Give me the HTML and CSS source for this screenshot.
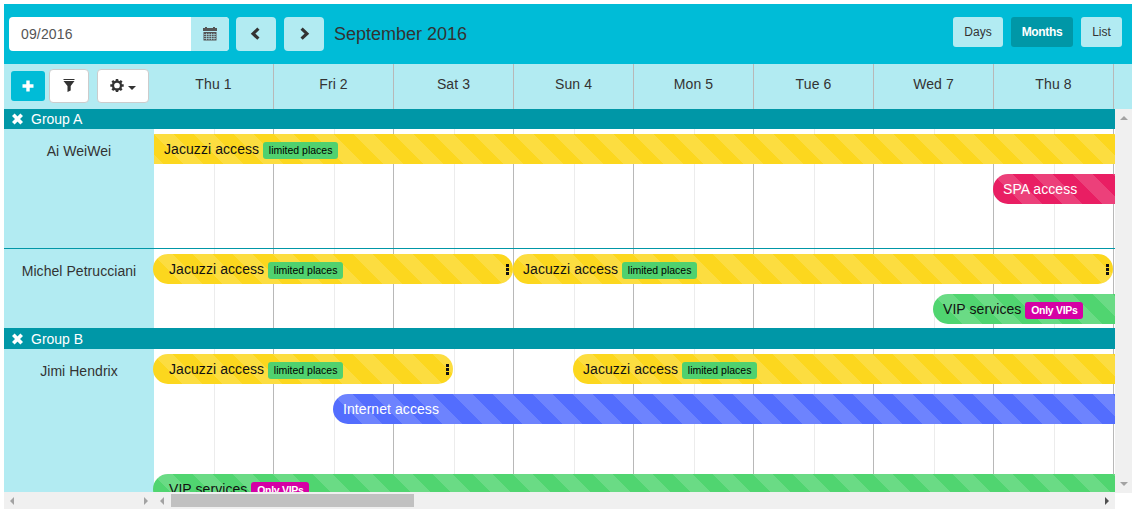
FILE: index.html
```html
<!DOCTYPE html>
<html lang="en">
<head>
<meta charset="utf-8">
<title>Calendar</title>
<link rel="stylesheet" href="styles.css">
</head>
<body>
<div class="planner">
  <header class="toolbar">
    <div class="date-field">
      <span class="date-value">09/2016</span>
      <span class="date-addon"><svg width="14" height="14" viewBox="0 0 14 14" fill="#555"><path d="M0 4V1h2V0h2v1h6V0h2v1h2v3z"/><path d="M.5 5h13v8.500H.5z"/><path d="M1 7.500h12M1 9.500h12M1 11.500h12M3.500 6v7M6 6v7M8.500 6v7M11 6v7" stroke="#b2ebf2" stroke-width=".6"/></svg></span>
    </div>
    <button class="nav"><svg width="14" height="14" viewBox="0 0 14 14"><path d="M9.400 1.700 4.100 6.700l5.300 5" fill="none" stroke="#333" stroke-width="3.200"/></svg></button>
    <button class="nav"><svg width="14" height="14" viewBox="0 0 14 14"><path d="M4.600 1.700 9.900 6.700l-5.300 5" fill="none" stroke="#333" stroke-width="3.200"/></svg></button>
    <h1 class="title">September 2016</h1>
    <nav class="views">
      <button class="view">Days</button>
      <button class="view active">Months</button>
      <button class="view">List</button>
    </nav>
  </header>

  <div class="heading">
    <div class="actions">
      <button class="add"><svg width="12" height="12" viewBox="0 0 12 12"><path d="M6 .5v11M.5 6h11" stroke="#fff" stroke-width="3.400"/></svg></button>
      <button class="tool filter"><svg width="12" height="14" viewBox="0 0 12 14" fill="#333"><path d="M.5 0h11v1H.5zM.5 2h11L7.700 7v4.500L4.500 13V7z"/></svg></button>
      <button class="tool gear"><svg width="14" height="14" viewBox="0 0 14 14" fill="none" stroke="#333"><circle cx="7" cy="6.500" r="4" stroke-width="2.300"/><path d="M7 0v2M7 11v2M.3 6.500h2M11.700 6.500h2M2.300 1.800l1.500 1.500M10.200 9.700l1.500 1.500M11.700 1.800l-1.500 1.500M3.800 9.700l-1.500 1.500" stroke-width="2.500"/></svg><i class="caret"></i></button>
    </div>
    <div class="days">
      <span>Thu 1</span><span>Fri 2</span><span>Sat 3</span><span>Sun 4</span><span>Mon 5</span><span>Tue 6</span><span>Wed 7</span><span>Thu 8</span>
    </div>
  </div>

  <div class="main">
    <div class="content">
      <div class="group"><svg width="11" height="12" viewBox="0 0 11 12"><path d="M1.300 1.800l8.400 8.400M9.700 1.800l-8.400 8.400" stroke="#fff" stroke-width="3.700"/></svg>Group A</div>
      <section class="row tall">
        <div class="name">Ai WeiWei</div>
        <div class="lanes">
          <div class="lane"><div class="bar yellow from-1 to-end continued">Jacuzzi access <b class="tag places">limited places</b></div></div>
          <div class="lane"><div class="bar red from-15 to-end">SPA access</div></div>
        </div>
      </section>
      <section class="row">
        <div class="name">Michel Petrucciani</div>
        <div class="lanes">
          <div class="lane">
            <div class="bar yellow from-1 to-7 closed">Jacuzzi access <b class="tag places">limited places</b><i class="grip"></i></div>
            <div class="bar yellow from-7 to-17 closed">Jacuzzi access <b class="tag places">limited places</b><i class="grip"></i></div>
          </div>
          <div class="lane"><div class="bar green from-14 to-end">VIP services <b class="tag vip">Only VIPs</b></div></div>
        </div>
      </section>
      <div class="group"><svg width="11" height="12" viewBox="0 0 11 12"><path d="M1.300 1.800l8.400 8.400M9.700 1.800l-8.400 8.400" stroke="#fff" stroke-width="3.700"/></svg>Group B</div>
      <section class="row last">
        <div class="name">Jimi Hendrix</div>
        <div class="lanes">
          <div class="lane">
            <div class="bar yellow from-1 to-6 closed">Jacuzzi access <b class="tag places">limited places</b><i class="grip"></i></div>
            <div class="bar yellow from-8 to-end">Jacuzzi access <b class="tag places">limited places</b></div>
          </div>
          <div class="lane"><div class="bar blue from-4 to-end">Internet access</div></div>
          <div class="lane"></div>
          <div class="lane"><div class="bar green from-1 to-end">VIP services <b class="tag vip">Only VIPs</b></div></div>
        </div>
      </section>
    </div>
    <div class="vscroll"><i class="arrow up"></i><i class="arrow down"></i></div>
  </div>
  <footer class="hscrolls">
    <div class="hscroll side"><i class="arrow left"></i><i class="arrow right"></i></div>
    <div class="hscroll wide"><i class="arrow left"></i><i class="thumb"></i><i class="arrow right dark"></i></div>
  </footer>
</div>
</body>
</html>
```
FILE: styles.css
```css
* { box-sizing: border-box; }
body {
  margin: 0;
  padding: 4px;
  overflow: hidden;
  background: #fff;
  color: #333;
  font: 14px/20px "Liberation Sans", Arial, sans-serif;
}
button { font: inherit; color: inherit; border: 0; padding: 0; display: flex; align-items: center; justify-content: center; }
svg { display: block; flex: none; }
.planner { width: 1128px; }

.toolbar { display: flex; align-items: flex-start; height: 60px; padding: 13px 10px 0 5px; background: #00bcd7; }
.date-field { display: flex; width: 220px; height: 34px; margin-right: 7px; border-radius: 4px; overflow: hidden; background: #fff; color: #555; }
.date-value { flex: 1; padding: 7px 12px; letter-spacing: .15px; }
.date-addon { width: 38px; display: flex; align-items: center; justify-content: center; background: #b2ebf2; }
.nav { width: 40px; height: 34px; margin-right: 8px; border-radius: 4px; background: #b2ebf2; }
.title { margin: 0 0 0 2px; font-size: 18px; font-weight: 400; line-height: 35px; }
.views { display: flex; gap: 8px; margin-left: auto; font-size: 12px; }
.view { height: 30px; width: 50px; border-radius: 3px; background: #b2ebf2; }
.view:last-child { width: 41px; }
.view.active { width: 62px; background: #0097a7; color: #fff; font-weight: 700; letter-spacing: -.35px; }

.heading { display: flex; height: 45px; background: #b2ebf2; }
.actions { display: flex; align-items: flex-start; width: 150px; padding: 5px 0 0 7px; }
.add { width: 34px; height: 30px; margin: 2px 4px 0 0; border-radius: 3px; background: #00bcd7; }
.tool { height: 34px; border: 1px solid #ccc; border-radius: 4px; background: #fff; }
.filter { width: 40px; margin-right: 8px; }
.gear { width: 52px; gap: 4px; }
.caret { border: 4px solid transparent; border-top-color: #333; border-bottom: 0; margin-top: 3px; }
.days { display: grid; grid-template-columns: repeat(8, 120px); }
.days span { padding-top: 10px; border-right: 1px solid #b8b8b8; text-align: center; letter-spacing: .1px; }

.main { display: flex; height: 383px; }
.content { width: 1111px; height: 383px; overflow: hidden; }
.group { display: flex; align-items: center; gap: 8px; height: 20px; padding-left: 8px; background: #0097a7; color: #fff; }
.row { display: flex; height: 80px; border-bottom: 1px solid #0097a7; }
.tall { height: 120px; }
.last { height: 160px; border: 0; }
.name { flex: none; width: 150px; padding-top: 12px; background: #b2ebf2; text-align: center; letter-spacing: .05px; }
.lanes {
  flex: 1;
  background:
    repeating-linear-gradient(90deg, transparent 0 60px, #ececec 60px 61px, transparent 61px 119px, #b8b8b8 119px 120px);
}
.lane { display: grid; grid-template-columns: repeat(16, 60px) 2px; height: 40px; margin-left: -1px; padding: 5px 0; }
.bar {
  --shine: rgba(255, 255, 255, .15);
  display: flex;
  height: 30px;
  padding-left: 10px;
  border-radius: 15px 0 0 15px;
  background-image: linear-gradient(45deg, var(--shine) 25%, transparent 25%, transparent 50%, var(--shine) 50%, var(--shine) 75%, transparent 75%, transparent);
  background-size: 40px 40px;
  line-height: 30px;
  letter-spacing: .07px;
  white-space: nowrap;
  grid-row: 1;
}
.bar.from-1 { padding-left: 16px; }
.bar.continued { padding-left: 10px; margin-left: 1px; border-radius: 0; }
.bar.closed { border-radius: 15px; }
.yellow { background-color: #fcd71e; color: #111; }
.red { background-color: #e91e63; color: #fff; }
.green { background-color: #50d570; color: #111; }
.blue { background-color: #536dfe; color: #fff; }
.from-1 { grid-column-start: 1; }
.from-4 { grid-column-start: 4; }
.from-7 { grid-column-start: 7; }
.from-8 { grid-column-start: 8; }
.from-14 { grid-column-start: 14; }
.from-15 { grid-column-start: 15; }
.to-6 { grid-column-end: 6; }
.to-7 { grid-column-end: 7; }
.to-17 { grid-column-end: 17; }
.to-end { grid-column-end: 18; }
.tag { height: 17px; margin: 8px 0 0 4px; border-radius: 3px; font-size: 10.5px; line-height: 17px; font-weight: 400; text-align: center; }
.places { width: 75px; background: #50d16f; color: #000; letter-spacing: 0; }
.vip { width: 58px; background: #d500a5; color: #fff; font-weight: 700; letter-spacing: -.3px; }
.grip { width: 3px; height: 11px; margin: 10px 4px 0 auto; background: radial-gradient(circle at 1.5px 1.5px, #111 1.5px, transparent 1.9px) 0 0 / 3px 4px; }

.vscroll { display: flex; flex-direction: column; justify-content: space-between; align-items: center; width: 17px; height: 384px; padding: 7px 0; background: #f0f0f0; }
.hscrolls { display: flex; height: 17px; }
.hscroll { display: flex; align-items: center; height: 17px; background: #f0f0f0; }
.side { width: 150px; padding: 0 6px; justify-content: space-between; }
.wide { width: 961px; padding: 0 6px; }
.thumb { width: 243px; height: 13px; margin: 0 auto 0 7px; background: #c1c1c1; }
.arrow { border: 4px solid transparent; }
.up { border-bottom-color: #a3a3a3; border-top: 0; }
.down { border-top-color: #a3a3a3; border-bottom: 0; }
.left { border-right-color: #a3a3a3; border-left: 0; }
.right { border-left-color: #a3a3a3; border-right: 0; }
.right.dark { border-left-color: #505050; }
```
